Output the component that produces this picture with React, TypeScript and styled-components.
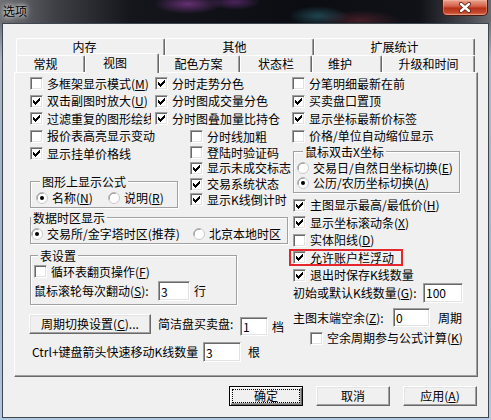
import React from 'react';
import styled, { createGlobalStyle } from 'styled-components';

const GlobalStyle = createGlobalStyle`
  html, body {
    margin: 0;
    padding: 0;
    background: #20242a;
  }
  body {
    font-family: "Noto Sans CJK SC", "Liberation Sans", sans-serif;
    font-size: 12px;
    color: #000;
  }
  u {
    text-underline-offset: 1px;
  }
`;

// 체크 표시 (클래식 7x7 비트맵)
const CheckMark = () => (
  <svg width="7" height="7" viewBox="0 0 7 7" shapeRendering="crispEdges">
    <path
      d="M6 0h1v1h-1zM5 1h2v1h-2zM0 2h1v1h-1zM4 2h3v1h-3zM0 3h2v1h-2zM3 3h3v1h-3zM0 4h5v1h-5zM1 5h3v1h-3zM2 6h1v1h-1z"
      fill="#000"
    />
  </svg>
);

const RadioDot = ({ on }: { on?: boolean }) => (
  <svg width="12" height="12" viewBox="0 0 12 12">
    <circle cx="6" cy="6" r="5.5" fill="#fff" stroke="#c8c8c8" />
    <path d="M1.3 7.6A5 5 0 0 1 7.6 1.3" fill="none" stroke="#8a8a8a" />
    {on && <circle cx="6" cy="6" r="2" fill="#000" />}
  </svg>
);

const CloseGlyph = () => (
  <svg width="14" height="11" viewBox="0 0 14 11">
    <path d="M3 2L11 9M11 2L3 9" stroke="#5a1d12" strokeWidth="4" strokeLinecap="round" />
    <path d="M3 2L11 9M11 2L3 9" stroke="#fff" strokeWidth="2.4" strokeLinecap="round" />
  </svg>
);

interface CheckProps {
  on?: boolean;
  h?: number;
  clip?: number;
  indent?: number;
  marked?: boolean;
  children: React.ReactNode;
}

const Check = ({ on, h, clip, indent, marked, children }: CheckProps) => (
  <CheckRow $h={h} $clip={clip} $indent={indent} $marked={marked}>
    <Box>{on && <CheckMark />}</Box>
    <Text>{children}</Text>
  </CheckRow>
);

const Radio = ({ on, w, children }: { on?: boolean; w?: number; children: React.ReactNode }) => (
  <RadioItem $w={w}>
    <RadioDot on={on} />
    <Text>{children}</Text>
  </RadioItem>
);

const App = () => {
  return (
    <>
      <GlobalStyle />
      <Window>
        <TitleBar>
          <Title>选项</Title>
          <CloseButton>
            <CloseGlyph />
          </CloseButton>
        </TitleBar>

        <Client>
          <TabStrip>
            <TabRow>
              <Tab $w={149} $shift={-6}>内存</Tab>
              <Tab $w={149} $shift={-5}>其他</Tab>
              <Tab $w={161}>扩展统计</Tab>
            </TabRow>
            <TabRow>
              <Tab $w={69} $shift={-5}>常规</Tab>
              <Tab $w={74} $shift={-7} $on>视图</Tab>
              <Tab $w={81} $shift={-1}>配色方案</Tab>
              <Tab $w={72}>状态栏</Tab>
              <Tab $w={70} $shift={-7}>维护</Tab>
              <Tab $w={93}>升级和时间</Tab>
            </TabRow>
          </TabStrip>

          <Panel>
            <LeftCol>
              <CheckGrid>
                <Check clip={121}>多框架显示模式(<u>M</u>)</Check>
                <Check on>分时走势分色</Check>
                <Check on clip={121}>双击副图时放大(<u>U</u>)</Check>
                <Check on>分时图成交量分色</Check>
                <Check on clip={121}>过滤重复的图形绘线</Check>
                <Check on>分时图叠加量比持仓</Check>
              </CheckGrid>

              <MidSection>
                <MidLeft>
                  <Check>报价表高亮显示变动</Check>
                  <Check on>显示挂单价格线</Check>
                  <Group $w={148} $mt={18.5} $pl={5}>
                    <GroupTitle $inset={4}>图形上显示公式</GroupTitle>
                    <RadioRow $h={17.5}>
                      <Radio on w={72}>名称(<u>N</u>)</Radio>
                      <Radio>说明(<u>R</u>)</Radio>
                    </RadioRow>
                  </Group>
                </MidLeft>
                <MidRight>
                  <Check h={15.75}>分时线加粗</Check>
                  <Check h={15.75}>登陆时验证码</Check>
                  <Check h={15.75} on>显示未成交标志</Check>
                  <Check h={15.75} on>交易系统状态</Check>
                  <Check h={15.75} on>显示K线倒计时</Check>
                </MidRight>
              </MidSection>

              <Group $w={258} $mt={9.25}>
                <GroupTitle $inset={0}>数据时区显示</GroupTitle>
                <RadioRow $h={17.5}>
                  <Radio on w={162}>交易所/金字塔时区(推荐)</Radio>
                  <Radio>北京本地时区</Radio>
                </RadioRow>
              </Group>

              <Group $w={207} $mt={11.5} $pl={3} $pb={3}>
                <GroupTitle $inset={4}>表设置</GroupTitle>
                <Check>循环表翻页操作(<u>F</u>)</Check>
                <FieldRow $mt={0.5}>
                  <FieldLabel $w={124}>鼠标滚轮每次翻动(<u>S</u>):</FieldLabel>
                  <Field $w={32} readOnly value="3" />
                  <Unit $gap={4}>行</Unit>
                </FieldRow>
              </Group>

              <FieldRow $mt={9} $align="flex-start">
                <PushButton $w={122} $ml={-1}>
                  周期切换设置(<u>C</u>)...
                </PushButton>
                <FieldLabel $w={82} $ml={7} $h={20}>简洁盘买卖盘:</FieldLabel>
                <Field $w={28} $h={19} $mt={3} readOnly value="1" />
                <Unit $gap={4} $h={20} $mt={3}>档</Unit>
              </FieldRow>

              <FieldRow $mt={8}>
                <FieldLabel $w={171} $ml={2}>Ctrl+键盘箭头快速移动K线数量</FieldLabel>
                <Field $w={38} readOnly value="3" />
                <Unit $gap={7}>根</Unit>
              </FieldRow>
            </LeftCol>

            <RightCol>
              <Check>分笔明细最新在前</Check>
              <Check on>买卖盘口置顶</Check>
              <Check on>显示坐标最新价标签</Check>
              <Check>价格/单位自动缩位显示</Check>

              <Group $w={167} $mt={6} $ml={1} $pl={3} $pt={1} $pb={2}>
                <GroupTitle $inset={6}>鼠标双击X坐标</GroupTitle>
                <RadioRow $h={15}>
                  <Radio>交易日/自然日坐标切换(<u>E</u>)</Radio>
                </RadioRow>
                <RadioRow $h={15}>
                  <Radio on>公历/农历坐标切换(<u>A</u>)</Radio>
                </RadioRow>
              </Group>

              <CheckStack>
                <Check on indent={1}>主图显示最高/最低价(<u>H</u>)</Check>
                <Check on indent={1}>显示坐标滚动条(<u>X</u>)</Check>
                <Check indent={1}>实体阳线(<u>D</u>)</Check>
                <Check on marked>允许账户栏浮动</Check>
                <Check on indent={1}>退出时保存K线数量</Check>
              </CheckStack>

              <FieldRow $h={17.5} $ml={1}>
                <FieldLabel $w={130}>初始或默认K线数量(<u>G</u>):</FieldLabel>
                <Field $w={40} readOnly value="100" />
              </FieldRow>

              <FieldRow $mt={6.25} $ml={1}>
                <FieldLabel $w={100}>主图末端空余(<u>Z</u>):</FieldLabel>
                <Field $w={37} $h={19} readOnly value="0" />
                <Unit $gap={8}>周期</Unit>
              </FieldRow>

              <CheckStack $mt={1.75}>
                <Check indent={18}>空余周期参与公式计算(<u>K</u>)</Check>
              </CheckStack>
            </RightCol>
          </Panel>

          <Footer>
            <PushButton $w={74} $default>
              <FocusRing>确定</FocusRing>
            </PushButton>
            <PushButton $w={74}>取消</PushButton>
            <PushButton $w={74}>
              应用(<u>A</u>)
            </PushButton>
          </Footer>
        </Client>
      </Window>
    </>
  );
};

const Window = styled.div`
  width: 491px;
  height: 420px;
  box-sizing: border-box;
  padding: 0 2px 2px;
  display: flex;
  flex-direction: column;
  overflow: hidden;
  background: linear-gradient(180deg, #4a4e56 0px, #aab4c0 60px, #9fb6cf 300px, #b4c8de 420px);
`;

const TitleBar = styled.div`
  height: 23px;
  margin: 0 -2px;
  padding: 0 3px;
  display: flex;
  justify-content: space-between;
  align-items: flex-start;
  background:
    radial-gradient(ellipse 34px 10px at 188px 4px, rgba(170, 70, 190, 0.55), transparent),
    radial-gradient(ellipse 26px 8px at 235px 2px, rgba(150, 60, 180, 0.45), transparent),
    radial-gradient(ellipse 30px 10px at 318px 16px, rgba(70, 170, 190, 0.35), transparent),
    radial-gradient(ellipse 40px 10px at 360px 20px, rgba(190, 60, 80, 0.3), transparent),
    linear-gradient(90deg, #6e7074 0px, #3e4046 55px, #14161c 130px, #0b0d12 300px, #101218 420px, #4a4c52 470px, #6a6c70 491px);
`;

const Title = styled.span`
  margin-top: 4px;
  line-height: 14px;
  font-size: 12px;
  color: #000;
  text-shadow: 0 0 4px #fff, 0 0 7px rgba(255, 255, 255, 0.8);
`;

const CloseButton = styled.div`
  width: 46px;
  height: 16px;
  box-sizing: border-box;
  display: flex;
  align-items: center;
  justify-content: center;
  border: 1px solid #4a1a12;
  border-top: none;
  border-radius: 0 0 5px 5px;
  background: linear-gradient(180deg, #e9a48f 0%, #d4654a 40%, #b83018 55%, #c44a2e 85%, #e08060 100%);
  box-shadow: inset 0 0 0 1px rgba(255, 200, 180, 0.35);
`;

const Client = styled.div`
  flex: 1;
  border: 1px solid #3e4650;
  background: #f0f0f0;
  padding: 14px 10px 0 11px;
  display: flex;
  flex-direction: column;
`;

const TabStrip = styled.div`
  padding: 0 2px;
  display: flex;
  flex-direction: column;
`;

const TabRow = styled.div`
  display: flex;
  height: 17px;
  align-items: flex-start;
`;

const Tab = styled.div<{ $w: number; $on?: boolean; $shift?: number }>`
  flex: none;
  width: ${(p) => p.$w}px;
  height: ${(p) => (p.$on ? 20 : 17)}px;
  margin-top: ${(p) => (p.$on ? -2 : 0)}px;
  padding-bottom: ${(p) => (p.$on ? 2 : 0)}px;
  padding-right: ${(p) => -(p.$shift ?? 0) * 2}px;
  box-sizing: border-box;
  position: relative;
  z-index: ${(p) => (p.$on ? 2 : 1)};
  display: flex;
  align-items: center;
  justify-content: center;
  line-height: 14px;
  background: #f0f0f0;
  border-top: 1px solid #fff;
  border-left: 1px solid #fff;
  border-right: 1px solid #696969;
  border-radius: 2px 2px 0 0;
  box-shadow: inset -1px 0 0 #a0a0a0;
`;

const Panel = styled.div`
  height: 305px;
  box-sizing: border-box;
  border: 1px solid;
  border-color: #fff #696969 #696969 #fff;
  box-shadow: inset -1px -1px 0 #a0a0a0;
  padding: 2px 0 0 15px;
  display: flex;
`;

const LeftCol = styled.div`
  width: 262px;
  flex: none;
  display: flex;
  flex-direction: column;
`;

const RightCol = styled.div`
  flex: 1;
  display: flex;
  flex-direction: column;
`;

const CheckGrid = styled.div`
  display: grid;
  grid-template-columns: 125px 1fr;
  grid-auto-rows: 17.5px;
`;

const MidSection = styled.div`
  display: flex;
  height: 80.25px;
`;

const MidLeft = styled.div`
  width: 160px;
  display: flex;
  flex-direction: column;
`;

const MidRight = styled.div`
  padding-top: 1.5px;
  display: flex;
  flex-direction: column;
`;

const CheckStack = styled.div<{ $mt?: number }>`
  margin-top: ${(p) => p.$mt ?? 3.25}px;
  display: flex;
  flex-direction: column;
`;

const CheckRow = styled.div<{ $h?: number; $clip?: number; $indent?: number; $marked?: boolean }>`
  flex: none;
  height: ${(p) => p.$h ?? 17.5}px;
  display: flex;
  align-items: center;
  gap: 4px;
  white-space: nowrap;
  box-sizing: border-box;
  margin-left: ${(p) => (p.$marked ? -3 : p.$indent ?? 0)}px;
  ${(p) => (p.$marked ? 'padding-left: 4px; width: 114px;' : '')}
  ${(p) => (p.$marked ? 'box-shadow: inset 0 0 0 2px #e5262b;' : '')}
  ${(p) => (p.$clip ? `width: ${p.$clip}px; overflow: hidden;` : '')}
`;

const Box = styled.span`
  flex: none;
  width: 13px;
  height: 13px;
  box-sizing: border-box;
  border: 1px solid;
  border-color: #a0a0a0 #fff #fff #a0a0a0;
  box-shadow: inset 1px 1px 0 #696969, inset -1px -1px 0 #e3e3e3;
  background: #fff;
  display: flex;
  align-items: center;
  justify-content: center;
`;

const Text = styled.span`
  line-height: 14px;
  white-space: nowrap;
`;

const Group = styled.div<{ $w: number; $mt?: number; $ml?: number; $pl?: number; $pt?: number; $pb?: number }>`
  flex: none;
  width: ${(p) => p.$w}px;
  box-sizing: border-box;
  margin-top: ${(p) => p.$mt ?? 0}px;
  margin-left: ${(p) => p.$ml ?? 0}px;
  padding: 0 0 ${(p) => p.$pb ?? 0}px ${(p) => p.$pl ?? 0}px;
  border: 1px solid #a0a0a0;
  box-shadow: inset 1px 1px 0 #fff, 1px 1px 0 #fff;
  display: flex;
  flex-direction: column;

  & > *:nth-child(2) {
    margin-top: ${(p) => p.$pt ?? 0}px;
  }
`;

const GroupTitle = styled.div<{ $inset: number }>`
  width: fit-content;
  height: 14px;
  line-height: 14px;
  margin: -7px 0 0 ${(p) => p.$inset}px;
  padding: 0 2px;
  background: #f0f0f0;
  white-space: nowrap;
`;

const RadioRow = styled.div<{ $h: number }>`
  height: ${(p) => p.$h}px;
  display: flex;
  align-items: center;
`;

const RadioItem = styled.div<{ $w?: number }>`
  ${(p) => (p.$w ? `width: ${p.$w}px;` : '')}
  flex: none;
  display: flex;
  align-items: center;
  gap: 4px;
`;

const FieldRow = styled.div<{ $mt?: number; $ml?: number; $h?: number; $align?: string }>`
  flex: none;
  height: ${(p) => p.$h ?? 20}px;
  margin-top: ${(p) => p.$mt ?? 0}px;
  margin-left: ${(p) => p.$ml ?? 0}px;
  display: flex;
  align-items: ${(p) => p.$align ?? 'center'};
  white-space: nowrap;
`;

const FieldLabel = styled.span<{ $w: number; $ml?: number; $h?: number }>`
  flex: none;
  width: ${(p) => p.$w}px;
  margin-left: ${(p) => p.$ml ?? 0}px;
  line-height: ${(p) => p.$h ?? 14}px;
`;

const Field = styled.input<{ $w: number; $h?: number; $mt?: number }>`
  flex: none;
  width: ${(p) => p.$w}px;
  height: ${(p) => p.$h ?? 20}px;
  margin: ${(p) => p.$mt ?? 0}px 0 0;
  box-sizing: border-box;
  padding: 0 0 0 2px;
  border: 1px solid;
  border-color: #a0a0a0 #fff #fff #a0a0a0;
  box-shadow: inset 1px 1px 0 #696969, inset -1px -1px 0 #e3e3e3;
  background: #fff;
  font: inherit;
  font-size: 12px;
  color: #000;
  outline: none;
`;

const Unit = styled.span<{ $gap: number; $h?: number; $mt?: number }>`
  margin-left: ${(p) => p.$gap}px;
  margin-top: ${(p) => p.$mt ?? 0}px;
  line-height: ${(p) => p.$h ?? 14}px;
`;

const PushButton = styled.div<{ $w: number; $ml?: number; $default?: boolean }>`
  flex: none;
  width: ${(p) => p.$w}px;
  height: 20px;
  margin-left: ${(p) => p.$ml ?? 0}px;
  box-sizing: border-box;
  display: flex;
  align-items: center;
  justify-content: center;
  line-height: 14px;
  background: #f0f0f0;
  border: 1px solid;
  border-color: ${(p) => (p.$default ? '#000' : '#fff #696969 #696969 #fff')};
  box-shadow: ${(p) =>
    p.$default
      ? 'inset 1px 1px 0 #fff, inset -1px -1px 0 #696969, inset -2px -2px 0 #a0a0a0'
      : 'inset -1px -1px 0 #a0a0a0, inset 1px 1px 0 #e3e3e3'};
  padding: ${(p) => (p.$default ? '2px' : '0')};
`;

const FocusRing = styled.span`
  flex: 1;
  align-self: stretch;
  display: flex;
  align-items: center;
  justify-content: center;
  border: 1px dotted #000;
`;

const Footer = styled.div`
  display: flex;
  justify-content: flex-end;
  gap: 13px;
  margin-top: 9px;
  padding-right: 1px;
`;

export default App;
